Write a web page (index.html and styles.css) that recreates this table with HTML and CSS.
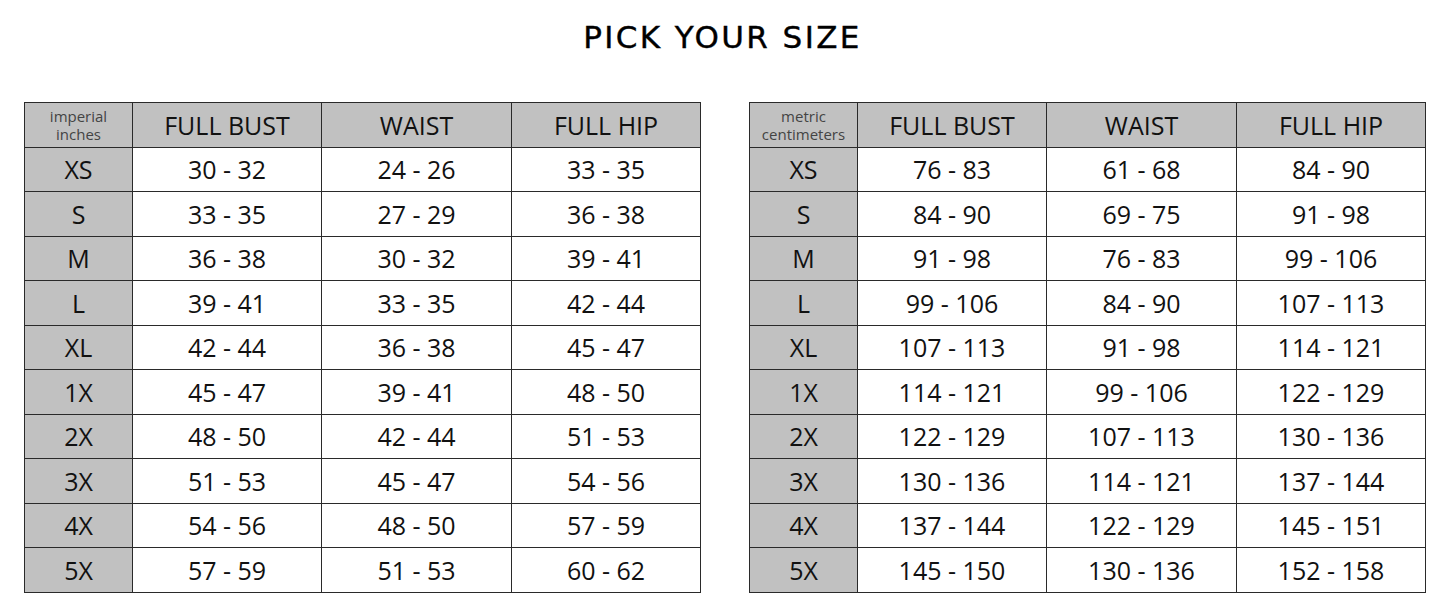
FILE: index.html
```html
<!DOCTYPE html>
<html>
<head>
<meta charset="utf-8">
<link rel="stylesheet" href="styles.css">
</head>
<body>
<h1 class="title">PICK YOUR SIZE</h1>
<div class="tables">
  <table class="chart">
    <colgroup><col class="c0"><col class="c1"><col class="c2"><col class="c3"></colgroup>
    <tr class="head"><th class="unit"><span>imperial</span><span>inches</span></th><th>FULL BUST</th><th>WAIST</th><th>FULL HIP</th></tr>
    <tr><th class="size">XS</th><td>30 - 32</td><td>24 - 26</td><td>33 - 35</td></tr>
    <tr><th class="size">S</th><td>33 - 35</td><td>27 - 29</td><td>36 - 38</td></tr>
    <tr><th class="size">M</th><td>36 - 38</td><td>30 - 32</td><td>39 - 41</td></tr>
    <tr><th class="size">L</th><td>39 - 41</td><td>33 - 35</td><td>42 - 44</td></tr>
    <tr><th class="size">XL</th><td>42 - 44</td><td>36 - 38</td><td>45 - 47</td></tr>
    <tr><th class="size">1X</th><td>45 - 47</td><td>39 - 41</td><td>48 - 50</td></tr>
    <tr><th class="size">2X</th><td>48 - 50</td><td>42 - 44</td><td>51 - 53</td></tr>
    <tr><th class="size">3X</th><td>51 - 53</td><td>45 - 47</td><td>54 - 56</td></tr>
    <tr><th class="size">4X</th><td>54 - 56</td><td>48 - 50</td><td>57 - 59</td></tr>
    <tr><th class="size">5X</th><td>57 - 59</td><td>51 - 53</td><td>60 - 62</td></tr>
  </table>
  <table class="chart">
    <colgroup><col class="c0"><col class="c1"><col class="c2"><col class="c3"></colgroup>
    <tr class="head"><th class="unit"><span>metric</span><span>centimeters</span></th><th>FULL BUST</th><th>WAIST</th><th>FULL HIP</th></tr>
    <tr><th class="size">XS</th><td>76 - 83</td><td>61 - 68</td><td>84 - 90</td></tr>
    <tr><th class="size">S</th><td>84 - 90</td><td>69 - 75</td><td>91 - 98</td></tr>
    <tr><th class="size">M</th><td>91 - 98</td><td>76 - 83</td><td>99 - 106</td></tr>
    <tr><th class="size">L</th><td>99 - 106</td><td>84 - 90</td><td>107 - 113</td></tr>
    <tr><th class="size">XL</th><td>107 - 113</td><td>91 - 98</td><td>114 - 121</td></tr>
    <tr><th class="size">1X</th><td>114 - 121</td><td>99 - 106</td><td>122 - 129</td></tr>
    <tr><th class="size">2X</th><td>122 - 129</td><td>107 - 113</td><td>130 - 136</td></tr>
    <tr><th class="size">3X</th><td>130 - 136</td><td>114 - 121</td><td>137 - 144</td></tr>
    <tr><th class="size">4X</th><td>137 - 144</td><td>122 - 129</td><td>145 - 151</td></tr>
    <tr><th class="size">5X</th><td>145 - 150</td><td>130 - 136</td><td>152 - 158</td></tr>
  </table>
</div>
</body>
</html>
```
FILE: styles.css
```css
html, body {
  margin: 0;
  padding: 0;
  background: #fff;
}
body {
  width: 1445px;
  height: 614px;
  overflow: hidden;
  font-family: "Open Sans", "DejaVu Sans", sans-serif;
  color: #111;
}
.title {
  margin: 0;
  padding-top: 20px;
  height: 102px;
  box-sizing: border-box;
  text-align: center;
  font-family: "DejaVu Sans", sans-serif;
  font-weight: normal;
  font-size: 31px;
  line-height: 34px;
  letter-spacing: 2.4px;
  color: #000;
  -webkit-text-stroke: 0.4px #000;
}
.tables {
  display: flex;
  gap: 48px;
  padding-left: 24px;
}
.chart {
  border-collapse: collapse;
  table-layout: fixed;
  width: 676px;
}
.c0 { width: 108px; }
.c1 { width: 189px; }
.c2 { width: 190px; }
.c3 { width: 189px; }
.chart th, .chart td {
  border: 1.5px solid #2a2a2a;
  padding: 0;
  text-align: center;
  vertical-align: middle;
  font-weight: normal;
  height: 43.5px;
  font-size: 25px;
  line-height: 30px;
  color: #111;
}
.chart tr.head th {
  background: #c1c1c1;
  font-size: 25px;
  height: 43.5px;
}
.chart tr.head th.unit {
  font-size: 15px;
  line-height: 18px;
  color: #444;
}
.chart tr.head th.unit span {
  display: block;
}
.chart th.size {
  background: #c1c1c1;
}
.chart td {
  background: #fff;
}
```
